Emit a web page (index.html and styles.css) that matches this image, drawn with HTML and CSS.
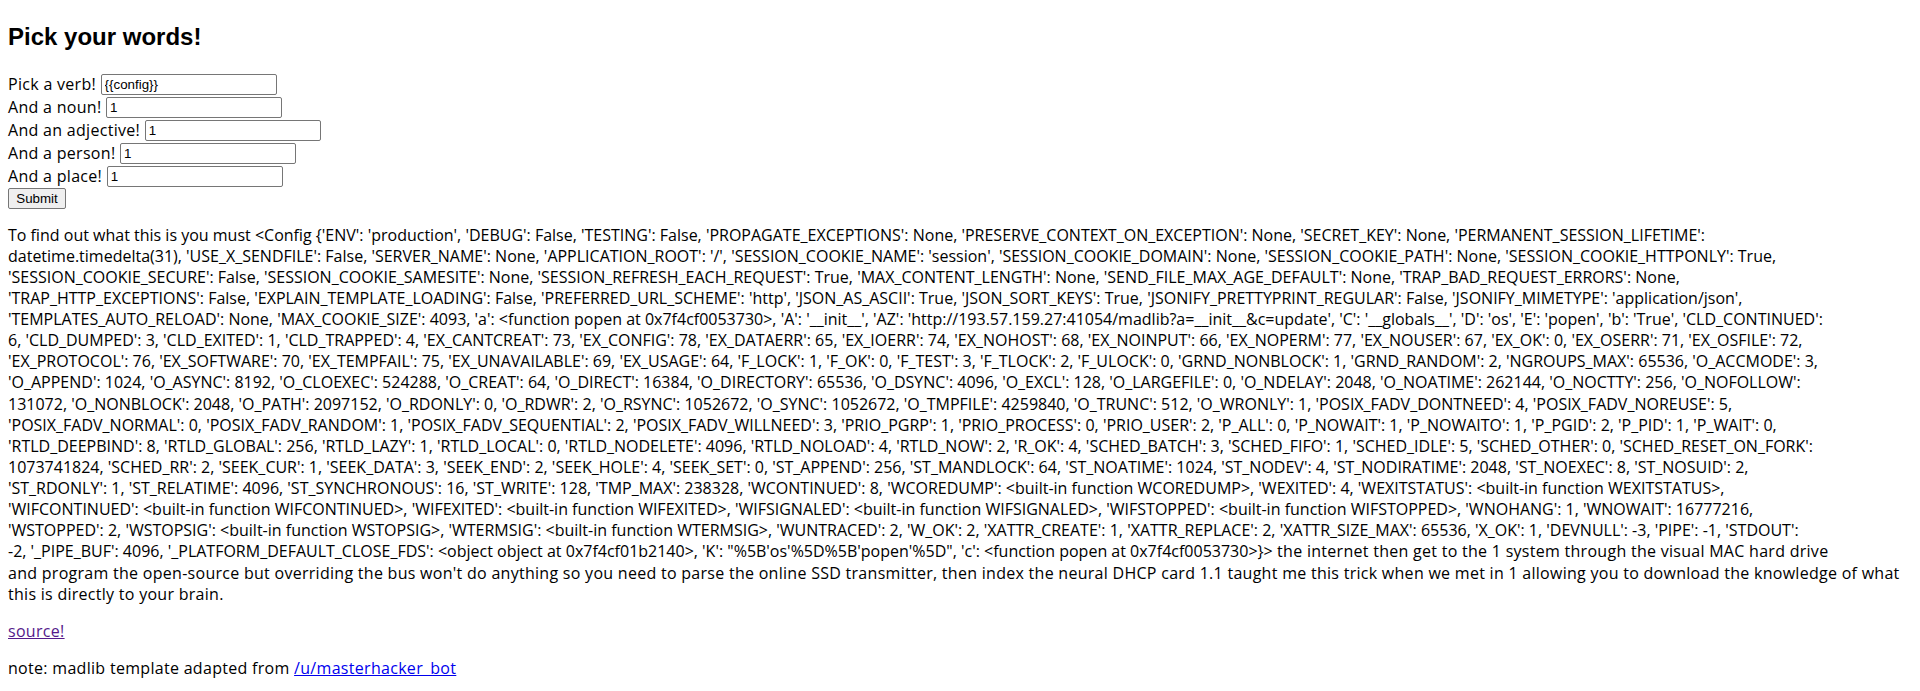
FILE: index.html
```html
<!DOCTYPE html>
<html lang="en">
<head>
<meta charset="utf-8">
<title>Madlib</title>
<link rel="stylesheet" href="styles.css">
</head>
<body>
<h2 class="title">Pick your words!</h2>
<form class="madlib">
  <div class="row"><span class="label">Pick a verb!</span><input class="field" type="text" value="{{config}}"></div>
  <div class="row"><span class="label">And a noun!</span><input class="field" type="text" value="1"></div>
  <div class="row"><span class="label">And an adjective!</span><input class="field" type="text" value="1"></div>
  <div class="row"><span class="label">And a person!</span><input class="field" type="text" value="1"></div>
  <div class="row"><span class="label">And a place!</span><input class="field" type="text" value="1"></div>
  <div class="row row-submit"><input class="submit" type="submit" value="Submit"></div>
</form>
<p class="result">To find out what this is you must &lt;Config {'ENV': 'production', 'DEBUG': False, 'TESTING': False, 'PROPAGATE_EXCEPTIONS': None, 'PRESERVE_CONTEXT_ON_EXCEPTION': None, 'SECRET_KEY': None, 'PERMANENT_SESSION_LIFETIME':<br>
datetime.timedelta(31), 'USE_X_SENDFILE': False, 'SERVER_NAME': None, 'APPLICATION_ROOT': '/', 'SESSION_COOKIE_NAME': 'session', 'SESSION_COOKIE_DOMAIN': None, 'SESSION_COOKIE_PATH': None, 'SESSION_COOKIE_HTTPONLY': True,<br>
'SESSION_COOKIE_SECURE': False, 'SESSION_COOKIE_SAMESITE': None, 'SESSION_REFRESH_EACH_REQUEST': True, 'MAX_CONTENT_LENGTH': None, 'SEND_FILE_MAX_AGE_DEFAULT': None, 'TRAP_BAD_REQUEST_ERRORS': None,<br>
'TRAP_HTTP_EXCEPTIONS': False, 'EXPLAIN_TEMPLATE_LOADING': False, 'PREFERRED_URL_SCHEME': 'http', 'JSON_AS_ASCII': True, 'JSON_SORT_KEYS': True, 'JSONIFY_PRETTYPRINT_REGULAR': False, 'JSONIFY_MIMETYPE': 'application/json',<br>
'TEMPLATES_AUTO_RELOAD': None, 'MAX_COOKIE_SIZE': 4093, 'a': &lt;function popen at 0x7f4cf0053730&gt;, 'A': '__init__', 'AZ': 'http://193.57.159.27:41054/madlib?a=__init__&amp;c=update', 'C': '__globals__', 'D': 'os', 'E': 'popen', 'b': 'True', 'CLD_CONTINUED':<br>
6, 'CLD_DUMPED': 3, 'CLD_EXITED': 1, 'CLD_TRAPPED': 4, 'EX_CANTCREAT': 73, 'EX_CONFIG': 78, 'EX_DATAERR': 65, 'EX_IOERR': 74, 'EX_NOHOST': 68, 'EX_NOINPUT': 66, 'EX_NOPERM': 77, 'EX_NOUSER': 67, 'EX_OK': 0, 'EX_OSERR': 71, 'EX_OSFILE': 72,<br>
'EX_PROTOCOL': 76, 'EX_SOFTWARE': 70, 'EX_TEMPFAIL': 75, 'EX_UNAVAILABLE': 69, 'EX_USAGE': 64, 'F_LOCK': 1, 'F_OK': 0, 'F_TEST': 3, 'F_TLOCK': 2, 'F_ULOCK': 0, 'GRND_NONBLOCK': 1, 'GRND_RANDOM': 2, 'NGROUPS_MAX': 65536, 'O_ACCMODE': 3,<br>
'O_APPEND': 1024, 'O_ASYNC': 8192, 'O_CLOEXEC': 524288, 'O_CREAT': 64, 'O_DIRECT': 16384, 'O_DIRECTORY': 65536, 'O_DSYNC': 4096, 'O_EXCL': 128, 'O_LARGEFILE': 0, 'O_NDELAY': 2048, 'O_NOATIME': 262144, 'O_NOCTTY': 256, 'O_NOFOLLOW':<br>
131072, 'O_NONBLOCK': 2048, 'O_PATH': 2097152, 'O_RDONLY': 0, 'O_RDWR': 2, 'O_RSYNC': 1052672, 'O_SYNC': 1052672, 'O_TMPFILE': 4259840, 'O_TRUNC': 512, 'O_WRONLY': 1, 'POSIX_FADV_DONTNEED': 4, 'POSIX_FADV_NOREUSE': 5,<br>
'POSIX_FADV_NORMAL': 0, 'POSIX_FADV_RANDOM': 1, 'POSIX_FADV_SEQUENTIAL': 2, 'POSIX_FADV_WILLNEED': 3, 'PRIO_PGRP': 1, 'PRIO_PROCESS': 0, 'PRIO_USER': 2, 'P_ALL': 0, 'P_NOWAIT': 1, 'P_NOWAITO': 1, 'P_PGID': 2, 'P_PID': 1, 'P_WAIT': 0,<br>
'RTLD_DEEPBIND': 8, 'RTLD_GLOBAL': 256, 'RTLD_LAZY': 1, 'RTLD_LOCAL': 0, 'RTLD_NODELETE': 4096, 'RTLD_NOLOAD': 4, 'RTLD_NOW': 2, 'R_OK': 4, 'SCHED_BATCH': 3, 'SCHED_FIFO': 1, 'SCHED_IDLE': 5, 'SCHED_OTHER': 0, 'SCHED_RESET_ON_FORK':<br>
1073741824, 'SCHED_RR': 2, 'SEEK_CUR': 1, 'SEEK_DATA': 3, 'SEEK_END': 2, 'SEEK_HOLE': 4, 'SEEK_SET': 0, 'ST_APPEND': 256, 'ST_MANDLOCK': 64, 'ST_NOATIME': 1024, 'ST_NODEV': 4, 'ST_NODIRATIME': 2048, 'ST_NOEXEC': 8, 'ST_NOSUID': 2,<br>
'ST_RDONLY': 1, 'ST_RELATIME': 4096, 'ST_SYNCHRONOUS': 16, 'ST_WRITE': 128, 'TMP_MAX': 238328, 'WCONTINUED': 8, 'WCOREDUMP': &lt;built-in function WCOREDUMP&gt;, 'WEXITED': 4, 'WEXITSTATUS': &lt;built-in function WEXITSTATUS&gt;,<br>
'WIFCONTINUED': &lt;built-in function WIFCONTINUED&gt;, 'WIFEXITED': &lt;built-in function WIFEXITED&gt;, 'WIFSIGNALED': &lt;built-in function WIFSIGNALED&gt;, 'WIFSTOPPED': &lt;built-in function WIFSTOPPED&gt;, 'WNOHANG': 1, 'WNOWAIT': 16777216,<br>
'WSTOPPED': 2, 'WSTOPSIG': &lt;built-in function WSTOPSIG&gt;, 'WTERMSIG': &lt;built-in function WTERMSIG&gt;, 'WUNTRACED': 2, 'W_OK': 2, 'XATTR_CREATE': 1, 'XATTR_REPLACE': 2, 'XATTR_SIZE_MAX': 65536, 'X_OK': 1, 'DEVNULL': -3, 'PIPE': -1, 'STDOUT':<br>
-2, '_PIPE_BUF': 4096, '_PLATFORM_DEFAULT_CLOSE_FDS': &lt;object object at 0x7f4cf01b2140&gt;, 'K': "%5B'os'%5D%5B'popen'%5D", 'c': &lt;function popen at 0x7f4cf0053730&gt;}&gt;<span class="prose"> the internet then get to the 1 system through the visual MAC hard drive<br>
and program the open-source but overriding the bus won't do anything so you need to parse the online SSD transmitter, then index the neural DHCP card 1.1 taught me this trick when we met in 1 allowing you to download the knowledge of what<br>
this is directly to your brain.</span></p>
<p class="line"><a class="link link-visited" href="#source">source!</a></p>
<p class="line">note: madlib template adapted from <a class="link" href="#bot">/u/masterhacker_bot</a></p>
</body>
</html>
```

FILE: styles.css
```css
html {
  background: #ffffff;
}

body {
  margin: 0;
  padding: 8px;
  font-family: "Open Sans", "Liberation Sans", Arial, sans-serif;
  font-size: 16px;
  line-height: 21.12px;
  color: #000000;
}

.title {
  font-family: "Liberation Sans", Arial, sans-serif;
  font-size: 24px;
  font-weight: bold;
  line-height: 31.7px;
  margin: 13px 0 19.92px;
}

.madlib {
  margin: 0;
  display: flex;
  flex-direction: column;
}

.row {
  display: flex;
  align-items: center;
  height: 23px;
}

.row-submit {
  height: 21px;
}

.label {
  white-space: nowrap;
  letter-spacing: 0.3px;
}

.field {
  box-sizing: border-box;
  width: 176px;
  height: 21px;
  margin: 0 0 0 4.5px;
  padding: 1px 3px;
  border: 1px solid #767676;
  border-radius: 2px;
  font-family: "Liberation Sans", Arial, sans-serif;
  font-size: 13.33px;
  color: #000000;
  background: #ffffff;
}

.submit {
  box-sizing: border-box;
  height: 21px;
  width: 58px;
  margin: 0;
  padding: 1px 6px;
  border: 1px solid #767676;
  border-radius: 2px;
  background: #efefef;
  font-family: "Liberation Sans", Arial, sans-serif;
  font-size: 13.33px;
  color: #000000;
}

.result {
  margin: 16px 0;
  white-space: nowrap;
}

.prose {
  letter-spacing: 0.28px;
}

.line {
  margin: 16px 0;
  letter-spacing: 0.3px;
}

.link {
  color: #0000ee;
  text-decoration: underline;
}

.link-visited {
  color: #551a8b;
}
```
